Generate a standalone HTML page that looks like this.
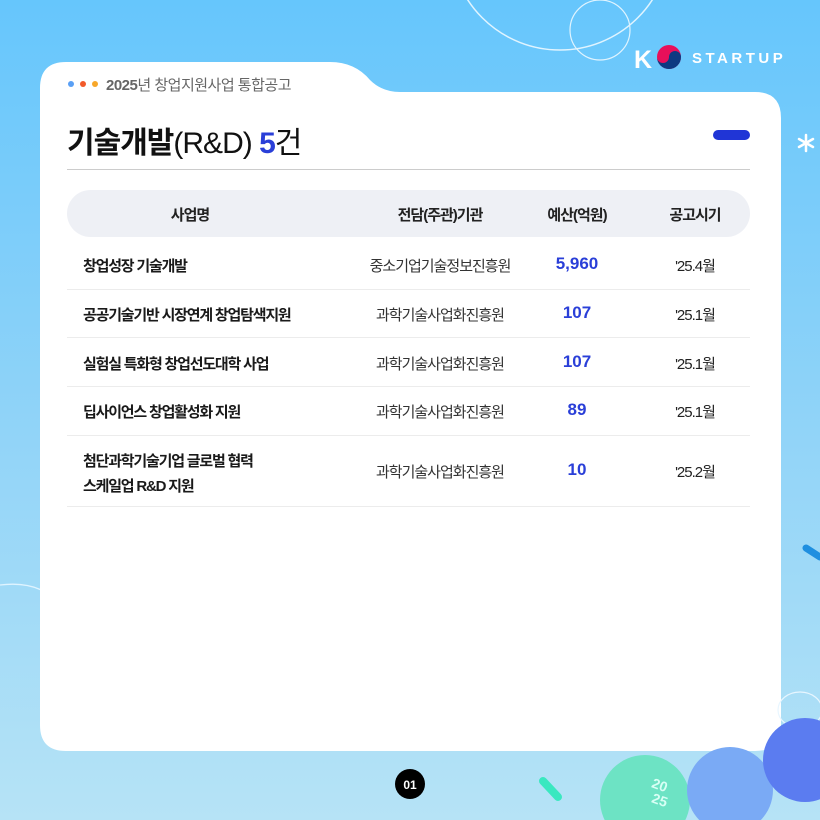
<!DOCTYPE html><html><head><meta charset="utf-8"><style>
body{margin:0;width:820px;height:820px;overflow:hidden;position:relative;background:linear-gradient(180deg,#66c6fc 0%,#8fd3f8 50%,#b6e3f6 100%);font-family:"Liberation Sans","Noto Sans CJK KR",sans-serif;}
.a{position:absolute}
.row{position:absolute;left:67px;width:683px;border-bottom:1px solid #ececec;}
.c{position:absolute;letter-spacing:-1px;color:#222;font-size:15px}
.nm{font-weight:700;color:#1a1a1a;letter-spacing:-1.2px}
.ag{font-weight:400;color:#333}
.n{color:#2a3fd8;font-weight:700;font-size:17px;letter-spacing:0}
.h{font-weight:700;font-size:15px;color:#222;letter-spacing:-1px}
</style></head><body>
<svg class="a" style="left:0;top:0" width="820" height="820">
<circle cx="560" cy="-60" r="110" fill="none" stroke="#e0f4ff" stroke-width="1.5"/>
<circle cx="600" cy="30" r="30" fill="none" stroke="#e0f4ff" stroke-width="1.2"/>
<path d="M0 585 Q40 580 60 605" fill="none" stroke="#e0f4ff" stroke-width="1.3"/>
<path d="M40 88 Q40 62 66 62 L330 62 Q355 62 370 80 Q382 92 400 92 L755 92 Q781 92 781 118 L781 725 Q781 751 755 751 L66 751 Q40 751 40 725 Z" fill="#fff"/>
<g stroke="#fff" stroke-width="2.5" stroke-linecap="round"><line x1="806" y1="135" x2="806" y2="151"/><line x1="799" y1="139" x2="813" y2="147"/><line x1="799" y1="147" x2="813" y2="139"/></g>
<line x1="806" y1="548" x2="820" y2="557" stroke="#1f8fe0" stroke-width="7" stroke-linecap="round"/>
<line x1="543" y1="781" x2="558" y2="797" stroke="#3ae8c0" stroke-width="8" stroke-linecap="round"/>
<ellipse cx="800" cy="710" rx="22" ry="18" fill="none" stroke="#e8f6ff" stroke-width="1.2"/>
<circle cx="645" cy="800" r="45" fill="#6de3c4"/>
<text x="652" y="790" font-size="14" font-weight="700" fill="#d8fff5" transform="rotate(20 660 785)" font-family="Liberation Sans">20</text>
<text x="652" y="805" font-size="14" font-weight="700" fill="#d8fff5" transform="rotate(20 660 800)" font-family="Liberation Sans">25</text>
<circle cx="730" cy="790" r="43" fill="#7aaaf5"/>
<circle cx="805" cy="760" r="42" fill="#5b7cf0"/>
<circle cx="410" cy="784" r="15" fill="#000"/>
<text x="410" y="789" font-size="12" font-weight="700" fill="#fff" text-anchor="middle" font-family="Liberation Sans">01</text>
<text x="634" y="68" font-size="25" font-weight="900" fill="#fff" font-family="Liberation Sans">K</text>
<circle cx="669" cy="57" r="12" fill="#e8105a"/><path d="M657 57 a6 6 0 0 0 12 0 a6 6 0 0 1 12 0 a12 12 0 0 1 -24 0z" fill="#0d3a82"/>
<text x="692" y="63" font-size="15" font-weight="700" fill="#fff" letter-spacing="3.5" font-family="Liberation Sans">STARTUP</text>
</svg>
<div class="a" style="left:68px;top:81px;width:6px;height:6px;border-radius:3px;background:#5aa0f5"></div>
<div class="a" style="left:80px;top:81px;width:6px;height:6px;border-radius:3px;background:#f25a2a"></div>
<div class="a" style="left:92px;top:81px;width:6px;height:6px;border-radius:3px;background:#f7a72a"></div>
<div class="a" style="left:106px;top:74px;font-size:15px;color:#666;letter-spacing:-0.5px;white-space:nowrap"><b>2025</b>년 창업지원사업 통합공고</div>
<div class="a" style="left:67px;top:118px;font-size:30px;color:#111;letter-spacing:-1px;white-space:nowrap"><b>기술개발</b>(R&amp;D) <b style="color:#2a3fd8">5</b>건</div>
<div class="a" style="left:713px;top:130px;width:37px;height:10px;border-radius:5px;background:#2035d6"></div>
<div class="a" style="left:67px;top:169px;width:683px;height:1px;background:#ccc"></div>
<div class="a" style="left:67px;top:190px;width:683px;height:47px;border-radius:24px;background:#eef0f5"></div>
<div class="a h" style="left:0;width:380px;text-align:center;top:204px">사업명</div>
<div class="a h" style="left:340px;width:200px;text-align:center;top:204px">전담(주관)기관</div>
<div class="a h" style="left:527px;width:100px;text-align:center;top:204px">예산(억원)</div>
<div class="a h" style="left:645px;width:100px;text-align:center;top:204px">공고시기</div>
<div class="row" style="top:237px;height:52px"></div>
<div class="row" style="top:289px;height:48px"></div>
<div class="row" style="top:338px;height:48px"></div>
<div class="row" style="top:387px;height:48px"></div>
<div class="row" style="top:436px;height:70px"></div>
<div class="c nm" style="left:83px;top:255px">창업성장 기술개발</div>
<div class="c nm" style="left:83px;top:304px">공공기술기반 시장연계 창업탐색지원</div>
<div class="c nm" style="left:83px;top:353px">실험실 특화형 창업선도대학 사업</div>
<div class="c nm" style="left:83px;top:401px">딥사이언스 창업활성화 지원</div>
<div class="c nm" style="left:83px;top:449px;line-height:25px">첨단과학기술기업 글로벌 협력<br>스케일업 R&amp;D 지원</div>
<div class="c ag" style="left:340px;width:200px;text-align:center;top:255px">중소기업기술정보진흥원</div>
<div class="c ag" style="left:340px;width:200px;text-align:center;top:304px">과학기술사업화진흥원</div>
<div class="c ag" style="left:340px;width:200px;text-align:center;top:353px">과학기술사업화진흥원</div>
<div class="c ag" style="left:340px;width:200px;text-align:center;top:401px">과학기술사업화진흥원</div>
<div class="c ag" style="left:340px;width:200px;text-align:center;top:461px">과학기술사업화진흥원</div>
<div class="c n" style="left:527px;width:100px;text-align:center;top:254px">5,960</div>
<div class="c n" style="left:527px;width:100px;text-align:center;top:303px">107</div>
<div class="c n" style="left:527px;width:100px;text-align:center;top:352px">107</div>
<div class="c n" style="left:527px;width:100px;text-align:center;top:400px">89</div>
<div class="c n" style="left:527px;width:100px;text-align:center;top:460px">10</div>
<div class="c" style="left:645px;width:100px;text-align:center;top:255px">'25.4월</div>
<div class="c" style="left:645px;width:100px;text-align:center;top:304px">'25.1월</div>
<div class="c" style="left:645px;width:100px;text-align:center;top:353px">'25.1월</div>
<div class="c" style="left:645px;width:100px;text-align:center;top:401px">'25.1월</div>
<div class="c" style="left:645px;width:100px;text-align:center;top:461px">'25.2월</div>
</body></html>
